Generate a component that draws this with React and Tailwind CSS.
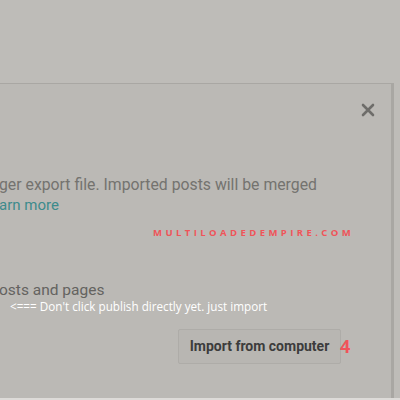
export default function App() {
  return (
    <div className="relative h-[400px] w-[400px] overflow-hidden bg-[#bebcb8] font-['Roboto',sans-serif]">
      <div className="pt-[83px]">
        <div className="relative h-[315px] w-[394px] border-t border-r-[3px] border-[#a9a7a3] bg-[#bbb9b5]">
          {/* close */}
          <svg className="absolute left-[361px] top-[19px]" width="14" height="14" viewBox="0 0 14 14">
            <path d="M2 2 L12 12 M12 2 L2 12" stroke="#6e6d6a" strokeWidth="2.6" strokeLinecap="round" />
          </svg>

          <div className="pt-[91px]">
            <p className="-ml-[1px] whitespace-nowrap text-[15.8px] leading-[20px] text-[#74736f]">
              ger export file. Imported posts will be merged
            </p>
            <p className="-ml-[1px] whitespace-nowrap text-[15px] leading-[20px] text-[#3d8b8c]">arn more</p>
          </div>

          <div className="mt-[11px] pl-[153px] text-[9.5px] leading-[14px] font-bold tracking-[0.36em] text-[#ef5459] font-['Open_Sans',sans-serif]">
            MULTILOADEDEMPIRE.COM
          </div>

          <p className="mt-[41px] -ml-[1px] whitespace-nowrap text-[15.5px] leading-[18px] text-[#646360]">
            osts and pages
          </p>
          <p className="-mt-[1px] pl-[10px] whitespace-nowrap text-[11.7px] leading-[16px] text-white font-['Open_Sans',sans-serif]">
            {"<=== Don't click publish directly yet. just import"}
          </p>

          <div className="mt-[15px] flex items-center pl-[178px]">
            <div className="flex h-[35px] w-[163px] items-center justify-center rounded-[2px] border border-[#aeaca8] bg-[#b8b6b2] text-[14px] font-bold text-[#3c3c3c]">
              Import from computer
            </div>
            <span className="ml-[-1px] text-[18px] font-bold text-[#f0545a] font-['Open_Sans',sans-serif]">4</span>
          </div>
        </div>
        <div className="h-[2px] bg-[#dddbd8]" />
      </div>
    </div>
  );
}
